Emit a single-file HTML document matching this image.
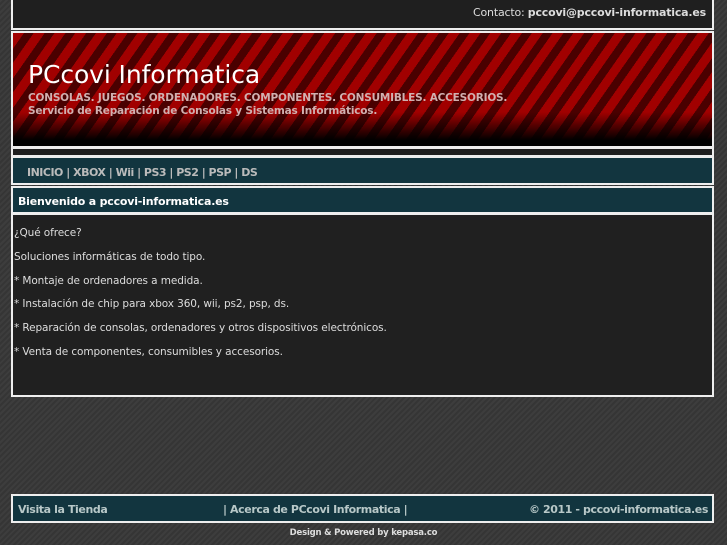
<!DOCTYPE html>
<html><head><style>
body{margin:0;width:727px;height:545px;overflow:hidden;background:#3a3a3a repeating-linear-gradient(135deg,#3d3d3d 0 2px,#353535 2px 4px);font-family:"DejaVu Sans",sans-serif;color:#ddd;position:relative}
.box{position:absolute;left:11px;width:699px;border:2px solid #eee;}
.top{top:-2px;height:30px;background:#1f1f1f;border-top:0}
.top span{position:absolute;right:6px;top:8px;font-size:11px;color:#ddd;letter-spacing:-0.2px}
.top b{color:#ddd}
.hdr{top:31px;height:113px;background:linear-gradient(to bottom,rgba(0,0,0,0) 0,rgba(0,0,0,0) 70%,#000 95%),repeating-linear-gradient(125deg,#a10000 0 9px,#4a0000 9px 17px);}
.hdr h1{position:absolute;left:15px;top:27px;margin:0;font-weight:normal;font-size:25px;letter-spacing:-0.1px;color:#fff}
.hdr p{position:absolute;left:15px;margin:0;font-size:10.5px;font-weight:bold;color:#d0b0b0;letter-spacing:-0.2px}
.gap{top:147px;height:6px;background:#1f1f1f}
.nav{top:156px;height:25px;background:#12353f;font-size:11px;font-weight:bold;color:#bbb}
.nav span{position:absolute;left:14px;top:8px;letter-spacing:-0.5px}
.tt{top:186px;height:24px;background:#12353f;font-size:11px;font-weight:bold;color:#fff}
.tt span{position:absolute;left:5px;top:7px;letter-spacing:-0.2px}
.ct{top:213px;height:180px;background:#202020;font-size:10.5px;color:#ddd}
.ct p{position:absolute;left:1px;margin:0;letter-spacing:-0.1px}
.ft{top:494px;height:25px;background:#12353f;font-size:11px;font-weight:bold;color:#b8c8c8}
.ft span{position:absolute;top:7px;letter-spacing:-0.4px}
.cr{position:absolute;top:528px;left:0;width:727px;text-align:center;font-size:8.5px;font-weight:bold;color:#ddd;letter-spacing:-0.2px}
</style></head><body>
<div class="box top"><span>Contacto: <b>pccovi@pccovi-informatica.es</b></span></div>
<div class="box hdr"><h1>PCcovi Informatica</h1>
<p style="top:59px">CONSOLAS. JUEGOS. ORDENADORES. COMPONENTES. CONSUMIBLES. ACCESORIOS.</p>
<p style="top:72px">Servicio de Reparación de Consolas y Sistemas Informáticos.</p></div>
<div class="box gap"></div>
<div class="box nav"><span>INICIO | XBOX | Wii | PS3 | PS2 | PSP | DS</span></div>
<div class="box tt"><span>Bienvenido a pccovi-informatica.es</span></div>
<div class="box ct">
<p style="top:12px">¿Qué ofrece?</p>
<p style="top:36px">Soluciones informáticas de todo tipo.</p>
<p style="top:60px">* Montaje de ordenadores a medida.</p>
<p style="top:83px">* Instalación de chip para xbox 360, wii, ps2, psp, ds.</p>
<p style="top:107px">* Reparación de consolas, ordenadores y otros dispositivos electrónicos.</p>
<p style="top:131px">* Venta de componentes, consumibles y accesorios.</p>
</div>
<div class="box ft"><span style="left:5px">Visita la Tienda</span><span style="left:210px">| Acerca de PCcovi Informatica |</span><span style="right:4px">© 2011 - pccovi-informatica.es</span></div>
<div class="cr">Design &amp; Powered by kepasa.co</div>
</body></html>
